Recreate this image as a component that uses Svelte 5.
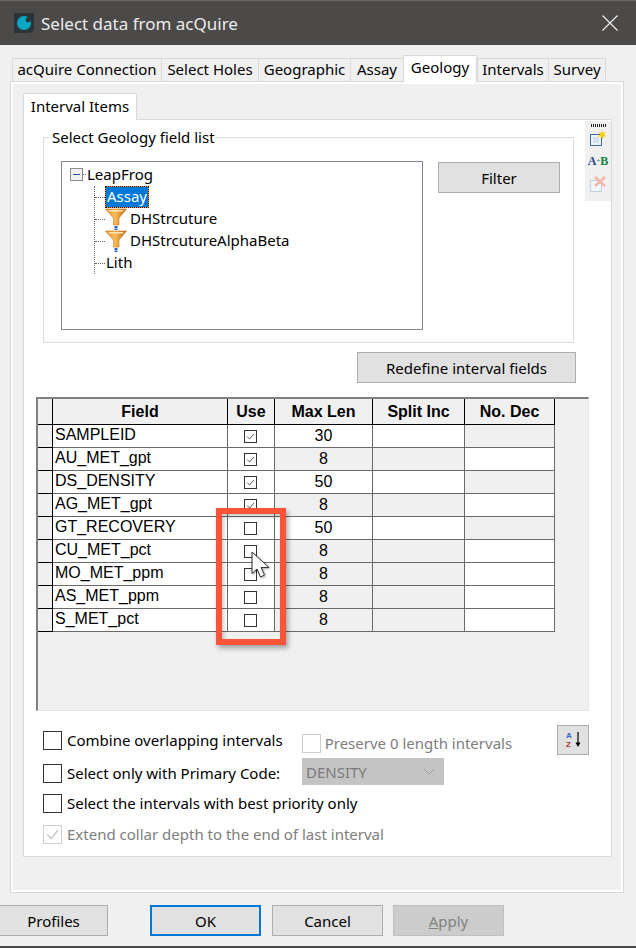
<script>
	const tabs = ['acQuire Connection', 'Select Holes', 'Geographic', 'Assay', 'Geology', 'Intervals', 'Survey'];
	const fields = [
		{ name: 'SAMPLEID', use: true, len: 30 },
		{ name: 'AU_MET_gpt', use: true, len: 8 },
		{ name: 'DS_DENSITY', use: true, len: 50 },
		{ name: 'AG_MET_gpt', use: true, len: 8 },
		{ name: 'GT_RECOVERY', use: false, len: 50 },
		{ name: 'CU_MET_pct', use: false, len: 8 },
		{ name: 'MO_MET_ppm', use: false, len: 8 },
		{ name: 'AS_MET_ppm', use: false, len: 8 },
		{ name: 'S_MET_pct', use: false, len: 8 }
	];

	function shaded(i) {
		return i % 2 === 1 || i > 4;
	}
</script>

{#snippet funnel(id)}
	<svg class="funnel" width="22" height="22" viewBox="0 0 22 22">
		<defs>
			<linearGradient {id} x1="0" x2="1" y1="0" y2="0">
				<stop offset="0" stop-color="#e8881c" />
				<stop offset="0.45" stop-color="#f9bd5c" />
				<stop offset="1" stop-color="#b9620a" />
			</linearGradient>
		</defs>
		<path d="M0.5 1 H21.5 L14 10 V17 H8.5 V10 Z" fill="url(#{id})" stroke="#c9781a" stroke-width="0.6" />
		<path d="M3 2 H19 L17.5 3.5 H4.5 Z" fill="#fde6b8" />
		<rect x="9.5" y="18" width="3" height="2" fill="#2f66bd" />
		<rect x="9.5" y="20.5" width="3" height="1.5" fill="#2f66bd" />
	</svg>
{/snippet}

{#snippet tick(color)}
	<svg class="tick" viewBox="0 0 13 13"><path d="M2.5 6.5 L5.5 9.5 L10.5 3.5" fill="none" stroke={color} stroke-width="1.1" /></svg>
{/snippet}

<div class="window">
	<header class="titlebar">
		<svg class="logo" width="22" height="22" viewBox="0 0 22 22">
			<path d="M1 1 H21 V15 Q21 21 15 21 H1 Z" fill="#2c3438" />
			<circle cx="11" cy="11" r="7" fill="#0aa7c4" />
			<circle cx="15" cy="8" r="2.4" fill="#2c3438" />
		</svg>
		<span class="title">Select data from acQuire</span>
		<svg class="close" width="16" height="16" viewBox="0 0 16 16">
			<path d="M0.5 0.5 L15.5 15.5 M15.5 0.5 L0.5 15.5" stroke="#f2f2f2" stroke-width="1.1" />
		</svg>
	</header>

	<main class="content">
		<nav class="tabs">
			{#each tabs as tab}
				<div class="tab" class:active={tab === 'Geology'}>{tab}</div>
			{/each}
		</nav>

		<section class="panel">
			<div class="subtab">Interval Items</div>
			<div class="subpanel">
				<div class="top">
					<div class="group">
						<div class="legend">Select Geology field list</div>
						<div class="group-row">
							<div class="tree">
								<div class="node root">
									<span class="expander"><i></i></span>
									<span class="twig-root"></span>
									LeapFrog
								</div>
								<div class="children">
									<div class="child">
										<span class="twig"></span>
										<span class="selected">Assay</span>
									</div>
									<div class="child">
										<span class="twig"></span>
										{@render funnel('fun-a')}
										<span class="label">DHStrcuture</span>
									</div>
									<div class="child">
										<span class="twig"></span>
										{@render funnel('fun-b')}
										<span class="label">DHStrcutureAlphaBeta</span>
									</div>
									<div class="child">
										<span class="twig"></span>
										<span class="label plain">Lith</span>
									</div>
								</div>
							</div>
							<button class="btn filter">Filter</button>
						</div>
					</div>

					<aside class="toolbar">
						<div class="grip"></div>
						<svg width="18" height="17" viewBox="0 0 18 17">
							<rect x="1.5" y="4.5" width="11" height="11" fill="#eef4fb" stroke="#3f6b94" />
							<path d="M4 8 H10 M4 10 H10 M4 12 H10" stroke="#b9cde0" />
							<path d="M13 0 L14 3 L17 2 L15 4.5 L17.5 6.5 L14.5 6.5 L13.5 9.5 L12 6.5 L9 7 L11 4.5 L9.5 2 L12 3 Z" fill="#f4d000" />
						</svg>
						<div class="ab"><span class="a">A</span><i>+</i><span class="b">B</span></div>
						<svg width="18" height="17" viewBox="0 0 18 17">
							<rect x="1.5" y="4.5" width="11" height="11" fill="#f1f4f8" stroke="#c2d0dd" />
							<path d="M6 1 L16 10 M16 1 L6 10" stroke="#f4b5a8" stroke-width="2.4" />
						</svg>
					</aside>
				</div>

				<div class="redefine-row">
					<button class="btn redefine">Redefine interval fields</button>
				</div>

				<div class="grid-wrap">
					<div class="grid">
						<div class="row head">
							<div class="rh"></div>
							<div>Field</div>
							<div>Use</div>
							<div>Max Len</div>
							<div>Split Inc</div>
							<div>No. Dec</div>
						</div>
						{#each fields as f, i}
							<div class="row">
								<div class="rh"></div>
								<div class="name">{f.name}</div>
								<div class="use">
									<span class="box">
										{#if f.use}{@render tick('#555')}{/if}
									</span>
								</div>
								<div class="num" class:grey={shaded(i)}>{f.len}</div>
								<div class:grey={shaded(i)}></div>
								<div class:grey={!shaded(i)}></div>
							</div>
						{/each}
					</div>
					<div class="callout"></div>
					<svg class="cursor" width="20" height="28" viewBox="0 0 20 28">
						<path d="M1 1 V22.5 L6 18 L9.5 26 L13.5 24 L10 16.5 L18 16.5 Z" fill="#fff" stroke="#333" stroke-width="1" />
					</svg>
				</div>

				<div class="options">
					<div class="opt">
						<span class="check"></span>
						<span class="opt-label">Combine overlapping intervals</span>
						<span class="check off second"></span>
						<span class="opt-label muted">Preserve 0 length intervals</span>
						<button class="btn sort" aria-label="Sort">
							<svg width="20" height="20" viewBox="0 0 20 20">
								<text x="3" y="8" class="az" fill="#3b5fc4">A</text>
								<text x="3" y="17" class="az" fill="#a8323a">Z</text>
								<path d="M15 2 V14" stroke="#000" stroke-width="1.2" />
								<path d="M12.5 12.5 H17.5 L15 17 Z" fill="#000" />
							</svg>
						</button>
					</div>
					<div class="opt primary">
						<span class="check"></span>
						<span class="opt-label">Select only with Primary Code:</span>
						<div class="combo">
							DENSITY
							<svg width="12" height="7" viewBox="0 0 12 7"><path d="M1 1 L6 6 L11 1" fill="none" stroke="#9a9a9a" /></svg>
						</div>
					</div>
					<div class="opt">
						<span class="check"></span>
						<span class="opt-label">Select the intervals with best priority only</span>
					</div>
					<div class="opt last">
						<span class="check off">{@render tick('#c6c6c6')}</span>
						<span class="opt-label muted">Extend collar depth to the end of last interval</span>
					</div>
				</div>
			</div>
		</section>
	</main>

	<footer class="footer">
		<button class="btn foot profiles">Profiles</button>
		<button class="btn foot ok">OK</button>
		<button class="btn foot cancel">Cancel</button>
		<button class="btn foot apply" disabled><u>A</u>pply</button>
	</footer>
</div>

<style>
	:global(body) {
		background: #f0f0f0;
	}

	.window {
		width: 636px;
		height: 948px;
		box-sizing: border-box;
		display: flex;
		flex-direction: column;
		overflow: hidden;
		background: #f0f0f0;
		border-bottom: 2px solid #4c4a48;
		font-family: 'Noto Sans', sans-serif;
		font-size: 15px;
		color: #000;
	}

	.titlebar {
		height: 45px;
		flex: none;
		display: flex;
		align-items: center;
		background: #4c4a48;
		border-top: 1px solid #6a6866;
		box-sizing: border-box;
		padding: 0 18px 0 13px;
		color: #ececec;
	}

	.title {
		margin-left: 6px;
		font-size: 17px;
		flex: 1;
	}

	.content {
		padding: 10px 12px 0 10px;
	}

	.tabs {
		margin-left: 2px;
		height: 26px;
		display: grid;
		grid-template-columns: 149px 97px 92px 53px 74px 71px 58px;
		justify-content: start;
		align-items: end;
	}

	.tab {
		height: 24px;
		box-sizing: border-box;
		border: 1px solid #d9d9d9;
		border-bottom: 0;
		border-right: 0;
		text-align: center;
		line-height: 21px;
		white-space: nowrap;
	}

	.tab:last-child {
		border-right: 1px solid #d9d9d9;
	}

	.tab.active {
		height: 28px;
		margin-bottom: -1px;
		background: #fff;
		border-right: 1px solid #d9d9d9;
		line-height: 22px;
		padding-bottom: 4px;
		position: relative;
		z-index: 1;
	}

	.panel {
		height: 812px;
		box-sizing: border-box;
		border: 1px solid #d9d9d9;
		box-shadow: inset 0 0 0 2px #fff;
		padding: 11px 12px 0 12px;
	}

	.subtab {
		width: 114px;
		height: 27px;
		box-sizing: border-box;
		background: #fff;
		border: 1px solid #d9d9d9;
		border-bottom: 0;
		text-align: center;
		line-height: 25px;
		margin-bottom: -1px;
		position: relative;
	}

	.subpanel {
		width: 589px;
		height: 738px;
		box-sizing: border-box;
		background: #fff;
		border: 1px solid #d9d9d9;
	}

	.top {
		display: flex;
		align-items: flex-start;
		padding-top: 1px;
	}

	.group {
		width: 531px;
		height: 206px;
		box-sizing: border-box;
		margin: 16px 11px 0 19px;
		border: 1px solid #dcdcdc;
	}

	.legend {
		width: fit-content;
		height: 20px;
		line-height: 20px;
		margin: -11px 0 0 7px;
		padding: 0 1px;
		background: #fff;
	}

	.group-row {
		display: flex;
		align-items: flex-start;
		margin: 14px 0 0 17px;
	}

	.tree {
		width: 362px;
		height: 169px;
		box-sizing: border-box;
		border: 1px solid #828790;
		padding-top: 1px;
		background: #fff;
		flex: none;
	}

	.root {
		height: 22px;
		display: flex;
		align-items: center;
		padding-left: 8px;
		line-height: 22px;
	}

	.expander {
		width: 11px;
		height: 11px;
		border: 1px solid #8c8c8c;
		background: #f1f1f1;
		display: flex;
		align-items: center;
		justify-content: center;
	}

	.expander i {
		display: block;
		width: 7px;
		height: 1px;
		background: #2f4f9f;
	}

	.twig-root {
		width: 3px;
		margin-right: 1px;
		border-bottom: 1px dotted #777;
	}

	.children {
		margin: 1px 0 0 32px;
		border-left: 1px dotted #666;
	}

	.child {
		height: 22px;
		display: flex;
		align-items: center;
	}

	.child:last-child {
		margin-bottom: -11px;
	}

	.twig {
		width: 10px;
		flex: none;
		border-bottom: 1px dotted #666;
	}

	.selected {
		height: 22px;
		box-sizing: border-box;
		padding: 0 1px;
		line-height: 19px;
		color: #fff;
		border: 1px dotted #201000;
		background: linear-gradient(#0078d7, #0078d7) padding-box, #f39a2c border-box;
		margin-top: -1px;
	}

	.funnel {
		flex: none;
		margin-right: 3px;
	}

	.label {
		margin-top: -2px;
	}

	.plain {
		margin-left: 1px;
	}

	.btn {
		font: inherit;
		color: inherit;
		background: #e1e1e1;
		border: 1px solid #adadad;
		padding: 0;
		box-sizing: border-box;
		border-radius: 0;
	}

	.filter {
		width: 122px;
		height: 31px;
		margin: 1px 0 0 15px;
	}

	.toolbar {
		width: 26px;
		height: 80px;
		background: #f0f0f0;
		display: flex;
		flex-direction: column;
		align-items: center;
		flex: none;
	}

	.grip {
		width: 15px;
		height: 3px;
		margin: 3px 0;
		background: repeating-linear-gradient(90deg, #222 0 1px, transparent 1px 2px);
		flex: none;
	}

	.toolbar svg {
		flex: none;
	}

	.ab {
		height: 14px;
		margin: 7px 0 8px;
		display: flex;
		align-items: center;
		font: bold 12px 'Liberation Serif', serif;
		flex: none;
	}

	.ab .a {
		color: #24478f;
	}

	.ab .b {
		color: #14803f;
	}

	.ab i {
		font-size: 7px;
		font-style: normal;
		color: #3a7a9a;
	}

	.redefine-row {
		display: flex;
		justify-content: flex-end;
		margin: 9px 35px 0 0;
	}

	.redefine {
		width: 219px;
		height: 31px;
	}

	.grid-wrap {
		position: relative;
		width: 553px;
		height: 314px;
		margin: 14px 0 0 12px;
	}

	.grid {
		height: 100%;
		box-sizing: border-box;
		background: #f0f0f0;
		border-top: 2px solid #808080;
		border-left: 2px solid #808080;
		border-right: 1px solid #e6e6e6;
		border-bottom: 1px solid #e6e6e6;
		font-family: 'Liberation Sans', Arial, sans-serif;
		font-size: 16px;
	}

	.row {
		display: grid;
		grid-template-columns: 15px 175px 47px 98px 92px 90px;
		grid-template-rows: 23px;
		height: 23px;
	}

	.row > div {
		box-sizing: border-box;
		background: #fff;
		border-right: 1px solid #696969;
		border-bottom: 1px solid #696969;
	}

	.row > div.grey,
	.row > div.rh {
		background: #f0f0f0;
	}

	.row > .rh {
		border-right-color: #000;
		border-bottom-color: #000;
	}

	.head {
		height: 26px;
		grid-template-rows: 26px;
		font-weight: bold;
		text-align: center;
		line-height: 25px;
	}

	.row.head > div {
		background: #f0f0f0;
		border-color: #000;
	}

	.name {
		padding-left: 2px;
		line-height: 19px;
		white-space: nowrap;
	}

	.use {
		display: flex;
		align-items: center;
		justify-content: center;
	}

	.box {
		width: 13px;
		height: 13px;
		box-sizing: border-box;
		border: 1px solid #333;
		display: block;
		margin-left: -1px;
	}

	.box .tick {
		display: block;
		width: 11px;
		height: 11px;
	}

	.num {
		text-align: center;
		line-height: 22px;
	}

	.callout {
		position: absolute;
		left: 180px;
		top: 111px;
		width: 70px;
		height: 137px;
		box-sizing: border-box;
		border: 6px solid #f9533a;
		box-shadow: 2px 3px 5px rgba(0, 0, 0, 0.35), inset 2px 3px 4px rgba(0, 0, 0, 0.2);
	}

	.cursor {
		position: absolute;
		left: 215px;
		top: 154px;
		filter: drop-shadow(1px 1px 1px rgba(0, 0, 0, 0.35));
	}

	.options {
		margin: 14px 22px 0 19px;
	}

	.opt {
		height: 30px;
		display: flex;
		align-items: center;
	}

	.primary {
		margin-top: 3px;
	}

	.last {
		margin-top: 1px;
	}

	.check {
		width: 19px;
		height: 19px;
		box-sizing: border-box;
		border: 1px solid #333;
		flex: none;
		margin-right: 5px;
		display: block;
	}

	.check.off {
		border-color: #cfcfcf;
	}

	.check .tick {
		display: block;
		width: 17px;
		height: 17px;
	}

	.second {
		margin: 6px 4px 0 19px;
	}

	.opt-label {
		white-space: nowrap;
	}

	.second + .opt-label {
		margin-top: 6px;
	}

	.muted {
		color: #7d7d7d;
	}

	.sort {
		width: 32px;
		height: 30px;
		margin-left: auto;
		display: flex;
		align-items: center;
		justify-content: center;
	}

	.az {
		font: bold 8px 'Liberation Sans', sans-serif;
	}

	.combo {
		width: 142px;
		height: 27px;
		box-sizing: border-box;
		margin: -3px 145px 0 auto;
		background: #c4c4c4;
		color: #7a7a7a;
		padding: 0 9px 0 4px;
		display: flex;
		align-items: center;
		justify-content: space-between;
	}

	.footer {
		display: flex;
		padding-top: 12px;
	}

	.foot {
		width: 111px;
		height: 31px;
		flex: none;
	}

	.profiles {
		width: 109px;
		margin-left: -1px;
	}

	.ok {
		margin-left: 42px;
		border: 2px solid #0078d7;
	}

	.cancel {
		margin-left: 11px;
	}

	.apply {
		margin-left: 10px;
		background: #cccccc;
		border-color: #bfbfbf;
		color: #838383;
	}
</style>
